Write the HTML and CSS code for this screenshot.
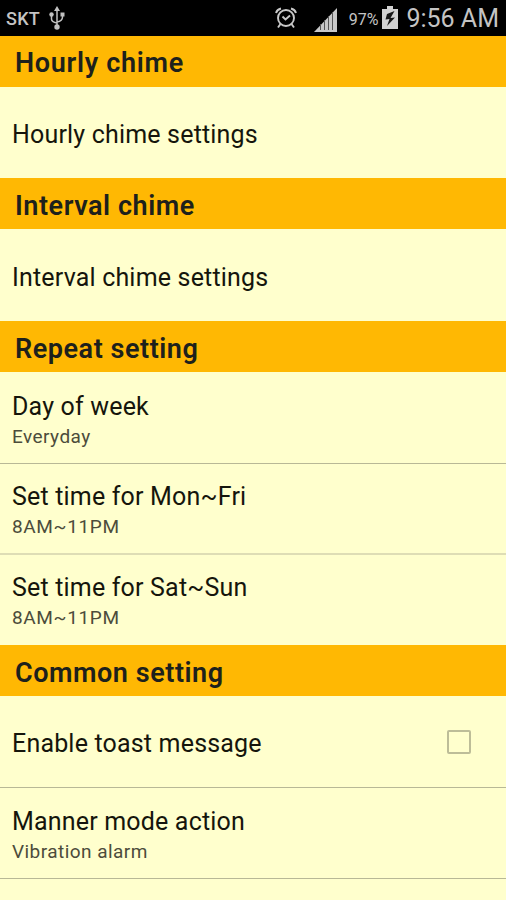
FILE: index.html
```html
<!DOCTYPE html>
<html lang="en"><head><meta charset="utf-8"><title>Chime settings</title><link rel="stylesheet" href="styles.css"></head>
<body>
<header class="status">
<span class="carrier">SKT</span>
<svg class="usb" width="16" height="24" viewBox="0 0 16 24" fill="none" stroke="#c0c0c0" stroke-width="1.5"><path d="M8 3v18M8 17Q2.500 16 2.500 13V9M8 16q5.500-1 5.500-5V8"/><path d="M8 0l3 5H5z" fill="#c0c0c0" stroke="none"/><circle cx="8" cy="21" r="2.700" fill="#c0c0c0" stroke="none"/><circle cx="2.500" cy="8.500" r="2.200" fill="#c0c0c0" stroke="none"/><path d="M11.500 6.500h4v4h-4z" fill="#c0c0c0" stroke="none"/></svg>
<svg class="alarm" width="22" height="22" viewBox="0 0 22 22" fill="none" stroke="#c8c8c8" stroke-width="1.900"><circle cx="11" cy="11" r="8"/><path d="M7.500 9.500l3 3 4.500-4M1 6Q2 2.500 6 1.500M21 6q-1-3.500-5-4.500M5.500 17L3 20.500M16.500 17l2.500 3.500"/></svg>
<svg class="signal" width="24" height="24" viewBox="0 0 24 24"><path d="M0 24L23 0v24z" fill="#c8c8c8"/><path d="M6.500 16v6M10.500 12v10M14.500 8v14M18.500 4v18" stroke="#555" stroke-width="1"/></svg>
<span class="percent">97%</span>
<svg class="battery" width="16" height="24" viewBox="0 0 16 24"><path d="M5 0h6v3h5v20H0V3h5z" fill="#d2d2d2"/><path d="M12.500 5L5 8 3.500 13.500l4-.5L5 20l8-8.500-4.500.5z" fill="#181818"/></svg>
<span class="clock">9:56 AM</span>
</header>
<main>
<h2>Hourly chime</h2>
<div class="row flush first"><span class="title">Hourly chime settings</span></div>
<h2 class="low">Interval chime</h2>
<div class="row flush"><span class="title">Interval chime settings</span></div>
<h2 class="low">Repeat setting</h2>
<div class="row tall"><span class="title">Day of week</span><span class="sub">Everyday</span></div>
<div class="row soft"><span class="title">Set time for Mon~Fri</span><span class="sub caps">8AM~11PM</span></div>
<div class="row last"><span class="title">Set time for Sat~Sun</span><span class="sub caps">8AM~11PM</span></div>
<h2 class="low">Common setting</h2>
<div class="row toggle"><span class="title">Enable toast message</span><span class="box"></span></div>
<div class="row"><span class="title">Manner mode action</span><span class="sub">Vibration alarm</span></div>
</main>
</body></html>
```
FILE: styles.css
```css
* { box-sizing: border-box; }
body { margin: 0; height: 900px; overflow: hidden; background: #ffffcd; color: #15150c; font-family: Roboto, sans-serif; }
.status { height: 36px; background: #000; color: #c4c4c4; display: flex; align-items: center; padding: 0 7px 0 6px; }
.carrier { font-size: 18px; font-weight: 500; letter-spacing: 0.3px; }
.usb { margin-left: 9px; }
.alarm { margin-left: auto; }
.signal { margin: 3px 0 0 17px; }
.percent { font-size: 16px; margin: 2px 0 0 11px; }
.battery { margin: 0 0 1px 4px; }
.clock { font-size: 25px; margin-left: 8px; }
h2 { margin: 0; height: 51px; padding: 3px 0 0 15px; background: #ffb803; color: #1d211c; display: flex; align-items: center; font-size: 27px; font-weight: 600; line-height: 32px; letter-spacing: 0.7px; }
.low { padding-top: 5px; letter-spacing: 0.55px; }
.row { height: 91px; padding: 5px 12px 0; border-bottom: 1px solid #b8b896; display: flex; flex-direction: column; justify-content: center; align-items: flex-start; }
.flush { height: 92px; border-bottom: 0; padding-top: 5px; }
.first { height: 91px; padding-top: 4px; }
.tall { height: 92px; padding-top: 6px; }
.soft { border-bottom: 2px solid #deddb5; }
.last { height: 90px; padding-top: 4px; border-bottom: 0; }
.title { font-size: 25px; line-height: 32px; letter-spacing: 0.18px; }
.sub { font-size: 19px; line-height: 28px; letter-spacing: 0.45px; color: #4c4c3b; }
.caps { letter-spacing: 0.65px; }
.toggle { height: 92px; flex-direction: row; align-items: center; justify-content: space-between; padding: 4px 35px 0 12px; }
.box { width: 24px; height: 24px; margin-bottom: 4px; border: 2px solid #bdbd98; border-radius: 2px; }
```
